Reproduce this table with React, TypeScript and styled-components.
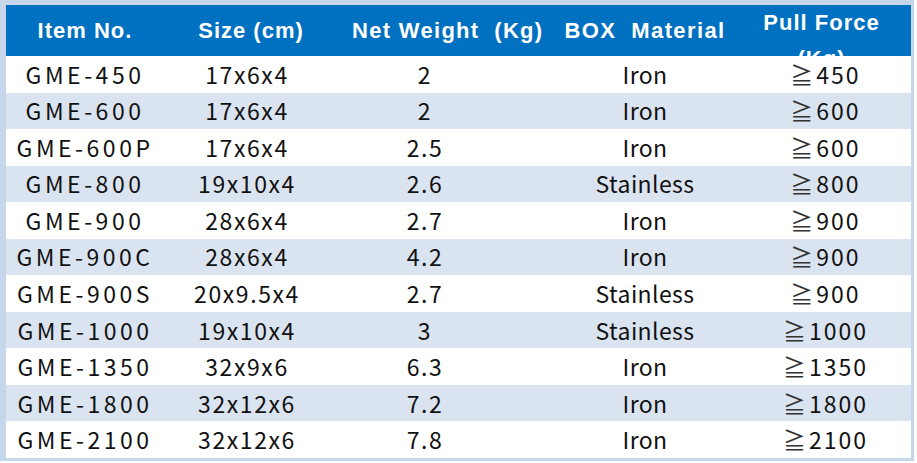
import styled, { createGlobalStyle } from "styled-components";

const rows = [
    ["GME-450", "17x6x4", "2", "Iron", "450"],
    ["GME-600", "17x6x4", "2", "Iron", "600"],
    ["GME-600P", "17x6x4", "2.5", "Iron", "600"],
    ["GME-800", "19x10x4", "2.6", "Stainless", "800"],
    ["GME-900", "28x6x4", "2.7", "Iron", "900"],
    ["GME-900C", "28x6x4", "4.2", "Iron", "900"],
    ["GME-900S", "20x9.5x4", "2.7", "Stainless", "900"],
    ["GME-1000", "19x10x4", "3", "Stainless", "1000"],
    ["GME-1350", "32x9x6", "6.3", "Iron", "1350"],
    ["GME-1800", "32x12x6", "7.2", "Iron", "1800"],
    ["GME-2100", "32x12x6", "7.8", "Iron", "2100"],
];

const App = () => {
    return (
        <>
            <GlobalStyle />
            <Frame>
                <Sheet>
                    <HeaderRow>
                        <HeadCell>Item No.</HeadCell>
                        <HeadCell $shift={4}>Size (cm)</HeadCell>
                        <HeadCell $shift={22} $spacing={1.3}>Net Weight&nbsp; (Kg)</HeadCell>
                        <HeadCell $spacing={1.4}>BOX&nbsp; Material</HeadCell>
                        <HeadCell $shift={-19} $top>
                            Pull Force<br />(Kg)
                        </HeadCell>
                    </HeaderRow>

                    {rows.map((r, i) => (
                        <BodyRow key={r[0]} $striped={i % 2 === 1}>
                            <Cell $spacing={3.5}>{r[0]}</Cell>
                            <Cell $spacing={1.6}>{r[1]}</Cell>
                            <Cell $spacing={1.5}>{r[2]}</Cell>
                            <Cell $spacing={0.4}>{r[3]}</Cell>
                            <Cell $shift={-15} $spacing={2}>
                                <Sign>≧</Sign>{r[4]}
                            </Cell>
                        </BodyRow>
                    ))}
                </Sheet>
            </Frame>
        </>
    );
};

// ─── Styled Components ────────────────────────────────────────────────────────
const GlobalStyle = createGlobalStyle`
    html, body { margin: 0; padding: 0; background: #ffffff; }
    body { font-family: "Noto Sans CJK KR", "Noto Sans", sans-serif; }
`;

const COLS = "158px 166px 190px 250px 141px";

const Frame = styled.div`
    width: 914px;
    height: 461px;
    box-sizing: border-box;
    padding: 5px 3px 3px 6px;
    background: #c6d7ec;
`;
const Sheet = styled.div`
    display: grid;
    grid-template-rows: 51px repeat(11, 1fr);
    height: 100%;
    background: #ffffff;
`;
const HeaderRow = styled.div`
    display: grid;
    grid-template-columns: ${COLS};
    grid-template-rows: 51px;
    height: 51px;
    background: #0070c0;
    overflow: hidden;
`;
const HeadCell = styled.div<{ $shift?: number; $top?: boolean; $spacing?: number }>`
    align-self: ${p => p.$top ? 'start' : 'center'};
    text-align: center;
    white-space: nowrap;
    color: #ffffff;
    font-family: "Liberation Sans", Arial, sans-serif;
    font-weight: 700;
    font-size: 22px;
    line-height: 36px;
    letter-spacing: ${p => p.$spacing ?? 1}px;
    transform: translateX(${p => p.$shift ?? 0}px);
`;
const BodyRow = styled.div<{ $striped: boolean }>`
    display: grid;
    grid-template-columns: ${COLS};
    align-items: center;
    background: ${p => p.$striped ? '#dae3f0' : '#ffffff'};
`;
const Cell = styled.div<{ $shift?: number; $spacing?: number }>`
    text-align: center;
    white-space: nowrap;
    color: #111111;
    font-size: 23px;
    line-height: 1;
    letter-spacing: ${p => p.$spacing ?? 0}px;
    transform: translateX(${p => p.$shift ?? 0}px);
`;
const Sign = styled.span`
    color: #333333;
    margin-right: 1px;
`;

export default App;
